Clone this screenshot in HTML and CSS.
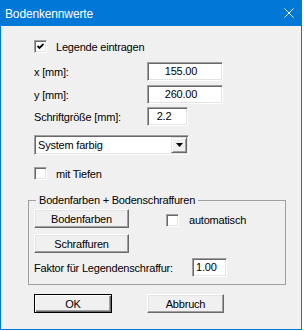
FILE: index.html
```html
<!DOCTYPE html>
<html lang="de">

<head>
    <meta charset="UTF-8">
    <meta name="viewport" content="width=device-width, initial-scale=1.0">
    <link rel="stylesheet" href="styles.css">
    <title>Bodenkennwerte</title>
</head>

<body>

    <div class="window">
        <div class="titlebar">
            <span class="title">Bodenkennwerte</span>
            <svg class="close" width="10" height="10" viewBox="0 0 10 10">
                <path d="M0.5 0.5 L9.5 9.5 M9.5 0.5 L0.5 9.5" stroke="#fff" stroke-width="1" fill="none" />
            </svg>
        </div>

        <div class="content">
            <div class="row check-row first">
                <span class="check">
                    <svg width="7" height="7" viewBox="0 0 7 7">
                        <polyline points="0.5,3 2.5,5 6.5,1" stroke="#000" stroke-width="1.8" fill="none" />
                    </svg>
                </span>
                <span>Legende eintragen</span>
            </div>

            <div class="row field field-x">
                <span class="field-label">x [mm]:</span>
                <span class="edit wide">155.00</span>
            </div>
            <div class="row field field-y">
                <span class="field-label">y [mm]:</span>
                <span class="edit wide">260.00</span>
            </div>
            <div class="row field field-size">
                <span class="field-label">Schriftgröße [mm]:</span>
                <span class="edit narrow">2.2</span>
            </div>

            <div class="row combo-row">
                <div class="combo">
                    <span class="combo-text">System farbig</span>
                    <span class="combo-btn">
                        <svg width="7" height="4" viewBox="0 0 7 4">
                            <polygon points="0,0 7,0 3.5,4" fill="#000" />
                        </svg>
                    </span>
                </div>
            </div>

            <div class="row check-row depth">
                <span class="check"></span>
                <span>mit Tiefen</span>
            </div>

            <fieldset class="group">
                <legend>Bodenfarben + Bodenschraffuren</legend>
                <div class="group-row">
                    <span class="btn btn-group">Bodenfarben</span>
                    <span class="check auto"></span>
                    <span>automatisch</span>
                </div>
                <div class="group-row second">
                    <span class="btn btn-group">Schraffuren</span>
                </div>
                <div class="group-row factor">
                    <span class="factor-label">Faktor für Legendenschraffur:</span>
                    <span class="edit small">1.00</span>
                </div>
            </fieldset>

            <div class="row actions">
                <span class="btn default ok">OK</span>
                <span class="btn cancel">Abbruch</span>
            </div>
        </div>
    </div>

</body>

</html>
```

FILE: styles.css
```css
* {
    box-sizing: border-box;
}

html,
body {
    margin: 0;
    background: #fff;
}

body {
    font-family: "Liberation Sans", Arial, sans-serif;
    font-size: 11px;
    letter-spacing: -0.2px;
    color: #000;
}

.window {
    width: 302px;
    height: 330px;
    border: 1px solid #0078d7;
    background: #f0f0f0;
}

.titlebar {
    height: 25px;
    background: #0078d7;
    color: #fff;
    display: flex;
    align-items: center;
    justify-content: space-between;
    padding: 0 7px 0 4px;
    font-size: 12px;
    letter-spacing: -0.15px;
}

.close {
    display: block;
    margin-top: -1px;
}

.content {
    padding: 14px 0 0 27px;
}

.row {
    display: flex;
    align-items: center;
    margin-left: 6px;
}

/* checkbox */
.check {
    width: 13px;
    height: 13px;
    flex: none;
    background: #fff;
    border: 1px solid;
    border-color: #a0a0a0 #fff #fff #a0a0a0;
    box-shadow: inset 1px 1px #696969, inset -1px -1px #e3e3e3;
    margin-right: 9px;
    display: flex;
    align-items: center;
    justify-content: center;
}

.check svg {
    display: block;
}

.check-row {
    height: 13px;
}

.depth {
    margin-top: 12px;
}

/* edit fields */
.field {
    height: 19px;
}

.field-x {
    margin-top: 9px;
}

.field-y {
    margin-top: 4px;
}

.field-size {
    margin-top: 3px;
}

.field-label {
    width: 113px;
}

.edit {
    height: 19px;
    line-height: 15px;
    padding-top: 1px;
    background: #fff;
    border: 1px solid;
    border-color: #a0a0a0 #fff #fff #a0a0a0;
    box-shadow: inset 1px 1px #696969, inset -1px -1px #e3e3e3;
}

.edit.wide {
    width: 76px;
    text-align: center;
    padding-right: 8px;
}

.edit.narrow {
    width: 41px;
    text-align: center;
    padding-right: 7px;
}

.edit.small {
    width: 35px;
    padding-left: 3px;
}

/* combo box */
.combo-row {
    margin-top: 9px;
}

.combo {
    width: 155px;
    height: 20px;
    display: flex;
    align-items: center;
    background: #fff;
    border: 1px solid;
    border-color: #a0a0a0 #fff #fff #a0a0a0;
    box-shadow: inset 1px 1px #696969, inset -1px -1px #e3e3e3;
    padding: 0 1px 0 3px;
}

.combo-btn {
    margin-left: auto;
    width: 16px;
    height: 16px;
    display: flex;
    align-items: center;
    justify-content: center;
    background: #f0f0f0;
    border: 1px solid;
    border-color: #e3e3e3 #696969 #696969 #e3e3e3;
    box-shadow: inset 1px 1px #fff, inset -1px -1px #a0a0a0;
}

.combo-btn svg {
    display: block;
}

/* group box */
.group {
    margin: 14px 0 0 0;
    width: 258px;
    min-width: 0;
    border: 1px solid #a0a0a0;
    padding: 2px 0 7px 5px;
}

.group legend {
    padding: 0 3px;
    margin-left: 2px;
    line-height: 13px;
}

.group-row {
    display: flex;
    align-items: center;
}

.group-row .auto {
    margin-left: 37px;
    margin-top: 3px;
    margin-right: 10px;
}

.group-row .auto + span {
    margin-top: 3px;
}

.second {
    margin-top: 6px;
}

.factor {
    margin-top: 5px;
}

.factor-label {
    width: 158px;
}

/* buttons */
.btn {
    height: 19px;
    display: flex;
    align-items: center;
    justify-content: center;
    background: #f0f0f0;
    border: 1px solid;
    border-color: #fff #696969 #696969 #fff;
    box-shadow: inset -1px -1px #a0a0a0, inset 1px 1px #e3e3e3;
}

.btn-group {
    width: 95px;
}

.btn.default {
    border-color: #000;
    box-shadow: inset 1px 1px #fff, inset -1px -1px #696969, inset -2px -2px #a0a0a0;
}

.actions {
    margin-top: 9px;
    gap: 35px;
}

.ok {
    width: 78px;
}

.cancel {
    width: 77px;
}
```
